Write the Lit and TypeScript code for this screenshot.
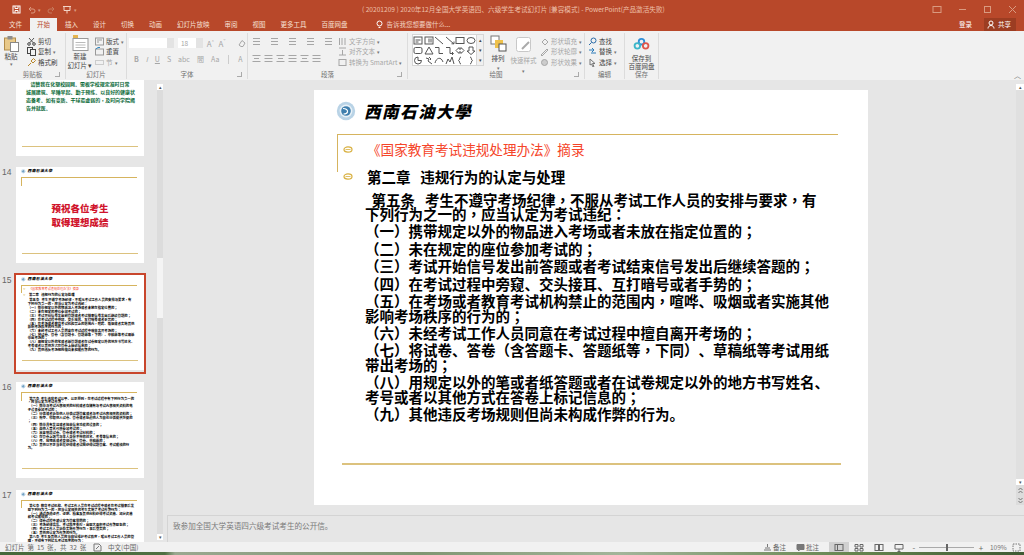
import { LitElement, html, css, svg } from "lit";
import { customElement, property } from "lit/decorators.js";

const ic = (body: unknown, w = 9, h = 9) =>
  html`<svg class="ic" width=${w} height=${h} viewBox="0 0 ${w} ${h}" fill="none" stroke="currentColor" stroke-width="1">${body}</svg>`;

// centres the full width punctuation in its cell, the slide font does that
const punct = (text: string) =>
  text.split(/([（）；：，])/).map((part) =>
    /^[（）；：，]$/.test(part) ? html`<span class="pc">${part}</span>` : part
  );

const BODY_15 = [
  "  第五条\u00a0\u00a0\u00a0考生不遵守考场纪律，不服从考试工作人员的安排与要求，有\n下列行为之一的，应当认定为考试违纪：",
  "（一）携带规定以外的物品进入考场或者未放在指定位置的；",
  "（二）未在规定的座位参加考试的；",
  "（三）考试开始信号发出前答题或者考试结束信号发出后继续答题的；",
  "（四）在考试过程中旁窥、交头接耳、互打暗号或者手势的；",
  "（五）在考场或者教育考试机构禁止的范围内，喧哗、吸烟或者实施其他\n影响考场秩序的行为的；",
  "（六）未经考试工作人员同意在考试过程中擅自离开考场的；",
  "（七）将试卷、答卷（含答题卡、答题纸等，下同）、草稿纸等考试用纸\n带出考场的；",
  "（八）用规定以外的笔或者纸答题或者在试卷规定以外的地方书写姓名、\n考号或者以其他方式在答卷上标记信息的；",
  "（九）其他违反考场规则但尚未构成作弊的行为。",
];

const BODY_16 = [
  "  第六条  考生违背考试公平、公正原则，在考试过程中有下列行为之一的，应当认定为考试作弊：",
  "  （一）携带与考试内容相关的材料或者存储有与考试内容相关资料的电子设备参加考试的；",
  "  （二）抄袭或者协助他人抄袭试题答案或者与考试内容相关的资料的；",
  "  （三）抢夺、窃取他人试卷、答卷或者胁迫他人为自己抄袭提供方便的；",
  "  （四）携带具有发送或者接收信息功能的设备的；",
  "  （五）由他人冒名代替参加考试的；",
  "  （六）故意销毁试卷、答卷或者考试材料的；",
  "  （七）在答卷上填写与本人身份不符的姓名、考号等信息的；",
  "  （八）传、接物品或者交换试卷、答卷、草稿纸的；",
  "  （九）其他以不正当手段获得或者试图获得试题答案、考试成绩的行为。",
];

const BODY_17 = [
  "  第七条  教育考试机构、考试工作人员在考试过程中或者在考试结束后发现下列行为之一的，应当认定相关的考生实施了考试作弊行为：",
  "  （一）通过伪造证件、证明、档案及其他材料获得考试资格、加分资格和考试成绩的；",
  "  （二）评卷过程中被认定为答案雷同的；",
  "  （三）考场纪律混乱、考试秩序失控，出现大面积考试作弊现象的；",
  "  （四）考试工作人员协助实施作弊行为，事后查实的；",
  "  （五）其他应认定为作弊的行为。",
  "",
  "  第八条  考生及其他人员应当自觉维护考试秩序，服从考试工作人员的管理，不得有下列扰乱考试秩序的行为：",
];

const BODY_13 =
  "    请赞我在化塑校园网。需板学校规定准时日常\n城展建筑、早睡早起、勤于预练。以良好的健康状\n态备考。如有变质、干球霉虚弱的，及时向学院揭\n告并就医。";

@customElement("slide-page")
class SlidePage extends LitElement {
  @property() kind = "15";

  bullet() {
    return html`<svg class="bullet" width="10" height="7" viewBox="0 0 10 7" fill="none" stroke="#d8b040" stroke-width="1.2">
      <ellipse cx="5" cy="3.5" rx="4" ry="2.6"></ellipse>
      <path d="M2.5 3.5h5" stroke-width=".8"></path>
    </svg>`;
  }

  header() {
    return html`<div class="brand">
      <svg width="20" height="20" viewBox="0 0 20 20">
        <circle cx="10" cy="10" r="9.2" fill="#b9d3e6"></circle>
        <circle cx="10" cy="10" r="6.4" fill="#e8f1f7"></circle>
        <circle cx="10" cy="10" r="4.8" fill="#3f7fae"></circle>
        <path d="M7 7.5c3 0 5 1.5 4.5 3.5S8.5 13 7.5 13" fill="none" stroke="#fff" stroke-width="1.2"></path>
      </svg>
      <span class="brand-name">西南石油大學</span>
    </div>`;
  }

  paragraphs(list: string[]) {
    return list.map((p) => html`<p>${punct(p)}</p>`);
  }

  render() {
    if (this.kind === "13") {
      return html`<div class="page">
        <div class="green">${punct(BODY_13)}</div>
        <div class="foot"></div>
      </div>`;
    }
    if (this.kind === "14") {
      return html`<div class="page">
        ${this.header()}
        <div class="frame"></div>
        <div class="greet">预祝各位考生<br />取得理想成绩</div>
        <div class="foot"></div>
      </div>`;
    }
    if (this.kind === "15") {
      return html`<div class="page">
        ${this.header()}
        <div class="frame">
          <div class="title">${this.bullet()}<span>《国家教育考试违规处理办法》摘录</span></div>
          <div class="chapter">${this.bullet()}<span>第二章&nbsp;&nbsp;&nbsp;违规行为的认定与处理</span></div>
        </div>
        <div class="body">${this.paragraphs(BODY_15)}</div>
        <div class="foot"></div>
      </div>`;
    }
    return html`<div class="page">
      ${this.header()}
      <div class="frame"></div>
      <div class="body wrap">${this.paragraphs(this.kind === "16" ? BODY_16 : BODY_17)}</div>
      <div class="foot"></div>
    </div>`;
  }

  static styles = css`
    :host {
      display: block;
      width: 554px;
      height: 415px;
      font-family: "Noto Sans CJK SC", "Liberation Sans", sans-serif;
    }
    .page {
      position: relative;
      width: 554px;
      height: 415px;
      background: #fff;
      overflow: hidden;
      color: #000;
    }
    .brand {
      display: flex;
      align-items: center;
      gap: 8px;
      height: 44px;
      padding: 0 0 3px 22px;
      box-sizing: border-box;
    }
    .brand-name {
      font-size: 16.5px;
      font-weight: 900;
      font-style: italic;
      letter-spacing: 1.5px;
      line-height: 20px;
    }
    .frame {
      height: 38px;
      margin-left: 23px;
      margin-right: 30px;
      border-top: 1.5px solid #d6b45e;
      border-left: 1.5px solid #d6b45e;
      box-sizing: border-box;
    }
    .title {
      display: flex;
      align-items: center;
      gap: 14px;
      height: 28px;
      padding-left: 5px;
      font-size: 13.6px;
      color: #f5452a;
    }
    .chapter {
      display: flex;
      align-items: center;
      gap: 14px;
      height: 26px;
      padding-left: 5px;
      font-size: 14.5px;
      font-weight: 700;
    }
    .bullet {
      flex: none;
    }
    .body {
      position: absolute;
      top: 102.5px;
      left: 51px;
      width: 490px;
      font-size: 14.5px;
      font-weight: 700;
      line-height: 14.6px;
    }
    .body p {
      margin: 0 0 2.8px;
      white-space: pre;
    }
    .body.wrap {
      top: 64px;
      width: 462px;
    }
    .body.wrap p {
      white-space: pre-wrap;
    }
    .pc {
      display: inline-block;
      width: 1em;
      text-align: center;
      font-family: "Noto Sans CJK TC", sans-serif;
    }
    .foot {
      position: absolute;
      left: 28px;
      right: 27px;
      bottom: 40px;
      border-top: 2px solid #dcc27e;
    }
    .greet {
      position: absolute;
      left: 0;
      right: 0;
      top: 150px;
      text-align: center;
      font-size: 41px;
      line-height: 60px;
      font-weight: 900;
      color: #d0142c;
    }
    .green {
      padding: 86px 0 0 43px;
      font-size: 21.5px;
      line-height: 35px;
      font-weight: 700;
      color: #0b6a38;
      white-space: pre;
    }
  `;
}

const shapes = [
  svg`<rect x="1" y="1" width="8" height="7"/><path d="M2.5 4h5M2.5 6h3"/>`,
  svg`<rect x="1" y="1" width="8" height="7"/><path d="M5 2.5v4M7 2.5v4"/>`,
  svg`<path d="M1 1l8 7"/>`,
  svg`<path d="M1 1l8 7M6.5 7.8h2.5V5.5"/>`,
  svg`<rect x="1" y="1.5" width="8" height="6"/>`,
  svg`<ellipse cx="5" cy="4.5" rx="4" ry="3"/>`,
  svg`<rect x="1" y="1.5" width="8" height="6" rx="1.5"/>`,
  svg`<path d="M5 1l4 7H1z"/>`,
  svg`<path d="M1 1.5h4v6h4"/>`,
  svg`<path d="M1 1.5h4v6h3M7 6l1.5 1.5L7 9"/>`,
  svg`<path d="M1 4.5l3-3V3h2V1.5l3 3-3 3V6H4v1.5z"/>`,
  svg`<path d="M3 1h4v4h2L5 8.5 1 5h2z"/>`,
  svg`<path d="M5 1a3.5 3.5 0 1 0 3.5 3.5H5z"/>`,
  svg`<path d="M2 2l3 1-1 2 4 3M5 1l2 2-1 1"/>`,
  svg`<path d="M1 7c1-5 6-7 8-1"/>`,
  svg`<path d="M1 8l2-5 2 3 2-5 2 7"/>`,
  svg`<path d="M6 1c-2 0-1 3.5-2.5 3.5C5 4.5 4 8 6 8"/>`,
  svg`<path d="M4 1c2 0 1 3.5 2.5 3.5C5 4.5 6 8 4 8"/>`,
];

@customElement("app-root")
class AppRoot extends LitElement {
  thumb(n: string) {
    return html`<div class="thumb-row ${n === "15" ? "current" : ""}">
      <span class="num">${n}</span>
      <div class="thumb"><slide-page kind=${n}></slide-page></div>
    </div>`;
  }

  ribbon() {
    return html`<div class="ribbon">
      <div class="group g-clip">
        <div class="tools">
          <div class="big paste">
            ${ic(svg`<rect x="1.5" y="3" width="11" height="12" fill="#e8c98a" stroke="#b28c4a"/><rect x="4.5" y="1" width="5" height="3.5" fill="#8d8d8d" stroke="none"/><rect x="7.5" y="7.5" width="8" height="9" fill="#fff" stroke="#888"/>`, 17, 17)}
            <span class="lbl">粘贴</span><span class="caret">▾</span>
          </div>
          <div class="col">
            <div class="item">${ic(svg`<circle cx="2" cy="7" r="1.3"/><circle cx="7" cy="7" r="1.3"/><path d="M2.5 6L7 1M6.5 6L2 1" stroke="#555"/>`)}<span>剪切</span></div>
            <div class="item">${ic(svg`<rect x=".5" y=".5" width="5" height="6"/><rect x="3.5" y="2.5" width="5" height="6" fill="#f1f1f1"/>`)}<span>复制</span><span class="caret">▾</span></div>
            <div class="item">${ic(svg`<path d="M1 8l3-3M4 3l2 2 2.5-2.5-2-2z" stroke="#b8862b"/>`)}<span>格式刷</span></div>
          </div>
        </div>
        <div class="cap">剪贴板<i class="launch"></i></div>
      </div>

      <div class="group g-slide">
        <div class="tools">
          <div class="big new">
            ${ic(svg`<rect x="1" y="3.5" width="15" height="12" fill="#fff" stroke="#999"/><path d="M3.5 7.5h10M3.5 10h10M3.5 12.5h10" stroke="#bbb"/><rect x="1" y="0" width="5" height="3" fill="#e5b44f" stroke="none"/>`, 17, 16)}
            <span class="lbl">新建</span><span class="lbl">幻灯片 ▾</span>
          </div>
          <div class="col">
            <div class="item">${ic(svg`<rect x=".5" y="1" width="8" height="7" stroke="#999"/><path d="M2 3h5M2 5h2" stroke="#999"/>`)}<span>版式</span><span class="caret">▾</span></div>
            <div class="item">${ic(svg`<rect x=".5" y="2" width="8" height="6" stroke="#999"/><path d="M1 2l2-1.5h2" stroke="#2e86c1"/>`)}<span>重置</span></div>
            <div class="item off">${ic(svg`<rect x=".5" y="2.5" width="8" height="4" stroke-dasharray="1 1"/>`)}<span>节</span><span class="caret">▾</span></div>
          </div>
        </div>
        <div class="cap">幻灯片</div>
      </div>

      <div class="group g-font">
        <div class="tools stack">
          <div class="row r-font">
            <div class="combo c-name"><i></i></div>
            <div class="combo c-size"><span>18</span><i></i></div>
            <span class="fa off">A<sup>^</sup></span><span class="fa off">A<sup>ˇ</sup></span>
            <span class="fa-clear off">${ic(svg`<path d="M1 6l3-4.5 3 2.5-2 3.5H3z"/>`)}</span>
          </div>
          <div class="row r-style off">
            <b>B</b><em>I</em><u>U</u><span>S</span><span>abc</span><span>間</span><span>Aa</span><span class="sep"></span><span>A</span>
          </div>
        </div>
        <div class="cap">字体<i class="launch"></i></div>
      </div>

      <div class="group g-para">
        <div class="tools">
          <div class="para">
            <div class="row off r-top">
              ${[0, 1, 2, 3, 4].map(() => ic(svg`<path d="M1 1.5h7M1 4.5h7M1 7.5h7"/>`))}
            </div>
            <div class="row off r-bottom">
              ${[0, 1, 2, 3, 4, 5].map((i) => ic(svg`<path d="M.5 1.5h8M${i % 2 ? 0.5 : 2} 4.5h${i % 2 ? 8 : 5}M.5 7.5h8"/>`))}
            </div>
          </div>
          <div class="col off">
            <div class="item">${ic(svg`<path d="M1.5 1v7M4 1v7M7 1v7"/>`)}<span>文字方向</span><span class="caret">▾</span></div>
            <div class="item">${ic(svg`<path d="M1 1h7M4.5 3v5M1 8h7"/>`)}<span>对齐文本</span><span class="caret">▾</span></div>
            <div class="item">${ic(svg`<rect x="1" y="1.5" width="7" height="6"/>`)}<span>转换为 SmartArt</span><span class="caret">▾</span></div>
          </div>
        </div>
        <div class="cap">段落<i class="launch"></i></div>
      </div>

      <div class="group g-draw">
        <div class="tools">
          <div class="gallery">
            <div class="shapes">${shapes.map((s) => ic(s, 10, 9))}</div>
            <div class="scroll"><span>▴</span><span>▾</span><span>▾</span></div>
          </div>
          <div class="big arrange">
            ${ic(svg`<rect x="1" y="1" width="8" height="8" fill="#fff" stroke="#777"/><rect x="5" y="5" width="8" height="8" fill="#efc14a" stroke="none"/><rect x="9" y="9" width="7" height="7" fill="#fff" stroke="#555"/>`, 17, 17)}
            <span class="lbl">排列</span><span class="caret">▾</span>
          </div>
          <div class="big quick off">
            ${ic(svg`<rect x="1.5" y="1.5" width="14" height="14" rx="2" fill="#fff" stroke="#c8c8c8"/><path d="M7 13l7-7" stroke="#aaa" stroke-width="2"/>`, 17, 17)}
            <span class="lbl">快速样式</span><span class="caret">▾</span>
          </div>
          <div class="col off">
            <div class="item">${ic(svg`<path d="M2 5l3-3 3 3-3 3z"/>`)}<span>形状填充</span><span class="caret">▾</span></div>
            <div class="item">${ic(svg`<path d="M1 8l6-6 1 1-6 6z"/>`)}<span>形状轮廓</span><span class="caret">▾</span></div>
            <div class="item">${ic(svg`<circle cx="4.5" cy="4.5" r="3" fill="#ccc"/>`)}<span>形状效果</span><span class="caret">▾</span></div>
          </div>
        </div>
        <div class="cap">绘图<i class="launch"></i></div>
      </div>

      <div class="group g-edit">
        <div class="tools">
          <div class="col">
            <div class="item">${ic(svg`<circle cx="5.5" cy="3.5" r="2.5" stroke="#2b6ca8"/><path d="M3.5 5.5L1 8" stroke="#2b6ca8"/>`)}<span>查找</span></div>
            <div class="item">${ic(svg`<path d="M1 3h5M4 1l2 2-2 2M8 6H3" stroke="#2b7bb9"/>`)}<span>替换</span><span class="caret">▾</span></div>
            <div class="item">${ic(svg`<path d="M2 1l5 4.5H4.5L6 8.5 5 9 3.5 6 2 7z" stroke="#777"/>`)}<span>选择</span><span class="caret">▾</span></div>
          </div>
        </div>
        <div class="cap">编辑</div>
      </div>

      <div class="group g-save">
        <div class="tools">
          <div class="big cloud">
            <svg width="17" height="13" viewBox="0 0 17 13" fill="none" stroke-width="2">
              <circle cx="8.5" cy="4" r="3" stroke="#2f8fd8"></circle>
              <circle cx="4" cy="8.5" r="3" stroke="#3bb6c9"></circle>
              <circle cx="13" cy="8.5" r="3" stroke="#e0564a"></circle>
            </svg>
            <span class="lbl lbl-top">保存到</span><span class="lbl">百度网盘</span>
          </div>
        </div>
        <div class="cap">保存</div>
      </div>

      <span class="collapse">︿</span>
    </div>`;
  }

  render() {
    return html`
      <div class="app">
        <div class="titlebar">
          <div class="qat">
            ${ic(svg`<rect x="1" y="1" width="7" height="7" stroke="#fff"/><path d="M3 1v2.5h3V1M3 8V5.5h3V8" stroke="#fff"/>`)}
            ${ic(svg`<path d="M2 4h4a2 2 0 0 1 0 4H4M2 4l2-2M2 4l2 2" stroke="#dc9a80"/>`)}
            <span class="dim">▾</span>
            ${ic(svg`<path d="M7 4H3a2 2 0 0 0 0 4h2M7 4L5 2M7 4L5 6" stroke="#c67a5e"/>`)}
            ${ic(svg`<path d="M1 1.5h8M2 1.5v4h6v-4M5 5.5v3" stroke="#f3d4c6"/>`, 10, 9)}
            <span class="dim">▾</span>
          </div>
          <div class="doc">( 20201209 ) 2020年12月全国大学英语四、六级学生考试幻灯片 [兼容模式] - PowerPoint(产品激活失败)</div>
          <div class="winbtns">
            ${ic(svg`<rect x="1" y="1.5" width="8" height="6" stroke="#d99a80"/>`, 10, 9)}
            ${ic(svg`<path d="M1 4.5h7" stroke="#d99a80"/>`)}
            ${ic(svg`<rect x="1.5" y="1.5" width="6" height="6" stroke="#d99a80"/>`)}
            ${ic(svg`<path d="M1 1l7 7M8 1l-7 7" stroke="#d99a80"/>`)}
          </div>
        </div>

        <div class="tabs">
          <span class="tab">文件</span>
          <span class="tab active">开始</span>
          ${["插入", "设计", "切换", "动画", "幻灯片放映", "审阅", "视图", "更多工具", "百度网盘"].map(
            (t) => html`<span class="tab">${t}</span>`
          )}
          <span class="tell">
            ${ic(svg`<circle cx="4.5" cy="3.5" r="2.5" stroke="#fff"/><path d="M3.5 7.5h2" stroke="#fff"/>`)}
            告诉我您想要做什么...
          </span>
          <span class="login">登录</span>
          <span class="share">
            ${ic(svg`<circle cx="4" cy="3" r="2" stroke="#fff"/><path d="M1 8.5c0-4 6-4 6 0" stroke="#fff"/>`)}共享
          </span>
        </div>

        ${this.ribbon()}

        <div class="main">
          <aside class="panel">
            <div class="thumbs">
              <div class="thumb-row first"><span class="num"></span><div class="thumb"><slide-page kind="13"></slide-page></div></div>
              ${this.thumb("14")}
              ${this.thumb("15")}
              ${this.thumb("16")}
              ${this.thumb("17")}
            </div>
            <div class="vbar small">
              <span class="arrow">▴</span>
              <span class="bar-thumb"></span>
              <span class="arrow end">▾</span>
            </div>
          </aside>

          <div class="work">
            <div class="canvas-row">
              <div class="canvas"><slide-page kind="15"></slide-page></div>
              <div class="vbar">
                <span class="arrow">▴</span>
                <span class="grow"></span>
                <span class="arrow">▾</span>
                <span class="jump">${ic(svg`<path d="M1.5 4L3.5 2l2 2M1.5 7l2-2 2 2" stroke="#777"/>`, 7, 9)}</span>
                <span class="jump">${ic(svg`<path d="M1.5 2l2 2 2-2M1.5 5l2 2 2-2" stroke="#777"/>`, 7, 9)}</span>
              </div>
            </div>
            <div class="notes">致参加全国大学英语四六级考试考生的公开信。</div>
          </div>
        </div>

        <div class="status">
          <span class="st-count">幻灯片 第 15 张，共 32 张</span>
          <span class="st-ic">${ic(svg`<path d="M1 1h5l2 2v5H1zM3 6l3-3" stroke="#777"/>`)}</span>
          <span>中文(中国)</span>
          <div class="st-right">
            <span class="st-btn">${ic(svg`<path d="M1 7h7M2 5h5M4.5 1v3" stroke="#777"/>`)}备注</span>
            <span class="st-btn">${ic(svg`<path d="M1 1.5h7v5H4L2.5 8V6.5H1z" fill="#777" stroke="#777"/>`)}批注</span>
            <span class="view on">${ic(svg`<rect x="1" y="1.5" width="8" height="6" stroke="#666"/><path d="M3.5 1.5v6" stroke="#666"/>`, 10, 9)}</span>
            <span class="view">${ic(svg`<path d="M1 1.5h3V4H1zM6 1.5h3V4H6zM1 5.5h3V8H1zM6 5.5h3V8H6z" stroke="#666"/>`, 10, 9)}</span>
            <span class="view">${ic(svg`<rect x="1" y="1.5" width="8" height="6" stroke="#666"/><path d="M5 1.5v6" stroke="#666" stroke-width="2"/>`, 10, 9)}</span>
            <span class="view">${ic(svg`<path d="M1 1.5h8V6H1zM5 6v2M3.5 8.5h3" stroke="#666"/>`, 10, 9)}</span>
            <span class="zoom-btn">-</span>
            <span class="slider"><i></i></span>
            <span class="zoom-btn">+</span>
            <span class="pct">109%</span>
            <span class="fit">${ic(svg`<rect x="1" y="1" width="7" height="7" stroke-dasharray="1.5 1" stroke="#777"/>`)}</span>
          </div>
        </div>
        <div class="desk"></div>
      </div>
    `;
  }

  static styles = css`
    :host {
      display: block;
      width: 1024px;
      height: 555px;
      overflow: hidden;
      font-family: "Noto Sans CJK SC", "Liberation Sans", sans-serif;
    }
    .app {
      display: flex;
      flex-direction: column;
      height: 555px;
      background: #e6e6e6;
      color: #444;
      font-size: 6.5px;
      line-height: 9px;
    }
    .ic {
      flex: none;
      display: block;
    }

    .titlebar {
      display: flex;
      align-items: center;
      height: 18px;
      background: #b8482a;
      flex: none;
    }
    .qat {
      display: flex;
      align-items: center;
      gap: 6px;
      width: 362px;
      padding-left: 12px;
      box-sizing: border-box;
      color: #fff;
    }
    .dim {
      color: #dc9a80;
      font-size: 5px;
      margin-left: -4px;
    }
    .doc {
      color: #eec0aa;
      font-size: 6.6px;
      white-space: nowrap;
    }
    .winbtns {
      display: flex;
      align-items: center;
      gap: 16px;
      margin-left: auto;
      padding-right: 7px;
    }

    .tabs {
      display: flex;
      align-items: stretch;
      height: 13px;
      flex: none;
      background: #b8482a;
      color: #f7e0d4;
      padding-left: 9px;
      gap: 15px;
      line-height: 13px;
      white-space: nowrap;
    }
    .tab.active {
      background: #f1f1f1;
      color: #b8482a;
      padding: 0 7px;
      margin: 0 -7px;
    }
    .tell {
      display: flex;
      align-items: center;
      gap: 3px;
      margin-left: 12px;
      color: #f2d2c2;
    }
    .login {
      margin-left: auto;
      color: #fff;
      margin-right: -3px;
    }
    .share {
      display: flex;
      align-items: center;
      gap: 2px;
      padding: 0 3px;
      margin: 0 8px 0 0;
      height: 13px;
      width: 26px;
      background: #9c3d22;
      color: #fff;
    }

    .ribbon {
      position: relative;
      display: flex;
      height: 49px;
      flex: none;
      background: #f1f1f1;
      white-space: nowrap;
    }
    .group {
      display: flex;
      flex-direction: column;
      box-sizing: border-box;
      margin: 2px 0 1px;
      border-right: 1px solid #dcdcdc;
    }
    .g-clip { width: 66px; }
    .g-slide { width: 61px; }
    .g-font { width: 121px; }
    .g-para { width: 160px; }
    .g-draw { width: 177px; }
    .g-edit { width: 40px; }
    .g-save { width: 34px; }
    .tools {
      flex: 1;
      display: flex;
      min-height: 0;
    }
    .tools.stack {
      flex-direction: column;
    }
    .cap {
      position: relative;
      height: 9px;
      flex: none;
      text-align: center;
      color: #707070;
    }
    .launch {
      position: absolute;
      right: 5px;
      top: 2px;
      width: 4px;
      height: 4px;
      border-right: 1px solid #aaa;
      border-bottom: 1px solid #aaa;
    }
    .big {
      display: flex;
      flex-direction: column;
      align-items: center;
      flex: none;
    }
    .lbl {
      display: block;
      line-height: 8px;
    }
    .caret {
      color: #777;
      font-size: 5px;
      line-height: 7px;
    }
    .col {
      display: flex;
      flex-direction: column;
      justify-content: space-between;
      padding: 3px 0;
    }
    .item {
      display: flex;
      align-items: center;
      gap: 2px;
      height: 10px;
    }
    .off {
      color: #a6a6a6;
    }

    .paste {
      width: 20px;
      margin: 2px 5px 0 1px;
    }
    .g-clip .col {
      padding-left: 1px;
    }
    .new {
      width: 24px;
      margin: 2px 3px 0 2px;
      gap: 1px;
    }

    .row {
      display: flex;
      align-items: center;
    }
    .r-font {
      height: 12px;
      margin: 4px 0 0 2px;
      gap: 4px;
    }
    .combo {
      position: relative;
      height: 10px;
      background: #fff;
      line-height: 10px;
      color: #a6a6a6;
      box-sizing: border-box;
      padding-left: 3px;
    }
    .combo i {
      position: absolute;
      right: 0;
      top: 0;
      bottom: 0;
      width: 7px;
      background: #e3e3e3;
    }
    .c-name { width: 47px; }
    .c-size { width: 26px; }
    .fa {
      font-size: 8px;
      width: 8px;
    }
    .fa sup {
      font-size: 4px;
      line-height: 0;
    }
    .fa-clear {
      margin-left: 8px;
    }
    .r-style {
      margin: 6px 0 0 7px;
      gap: 7px;
      font-size: 7px;
    }
    .r-style .sep {
      width: 1px;
      height: 9px;
      background: #ccc;
      margin: 0 2px;
    }

    .para {
      display: flex;
      flex-direction: column;
      width: 90px;
      padding: 3.5px 0 0 4px;
      box-sizing: border-box;
      gap: 8px;
    }
    .r-top {
      gap: 9px;
    }
    .r-bottom {
      gap: 3px;
    }

    .gallery {
      display: flex;
      width: 72px;
      height: 32px;
      margin: 1px 6px 0 4px;
      background: #fff;
      border: 1px solid #d6d6d6;
      box-sizing: border-box;
      flex: none;
    }
    .shapes {
      display: grid;
      grid-template-columns: repeat(6, 10.5px);
      grid-auto-rows: 10px;
      flex: 1;
      color: #555;
      align-items: center;
      justify-items: center;
    }
    .scroll {
      display: flex;
      flex-direction: column;
      width: 7px;
      margin-left: auto;
      font-size: 5px;
      line-height: 10px;
      text-align: center;
      background: #f0f0f0;
      border-left: 1px solid #d6d6d6;
    }
    .arrange {
      width: 16px;
      margin: 2px 4px 0 0;
      gap: 2px;
    }
    .quick {
      width: 27px;
      margin: 3px 3px 0 0;
      gap: 3px;
    }
    .g-edit .col {
      padding-left: 3px;
    }
    .cloud {
      width: 33px;
      margin-top: 5px;
    }
    .lbl-top {
      margin-top: 4px;
    }
    .collapse {
      position: absolute;
      right: 3px;
      bottom: 0;
      color: #777;
      font-size: 7px;
    }

    .main {
      flex: 1;
      display: flex;
      min-height: 0;
    }
    .panel {
      display: flex;
      width: 163px;
      flex: none;
      overflow: hidden;
    }
    .thumbs {
      flex: 1;
      min-width: 0;
      margin-top: -20px;
    }
    .thumb-row {
      display: flex;
      height: 107.5px;
      box-sizing: border-box;
      padding-top: 4px;
    }
    .first {
      height: 103px;
      padding-top: 0;
    }
    .num {
      width: 16px;
      padding-left: 2px;
      box-sizing: border-box;
      color: #666;
      font-size: 8.5px;
      line-height: 10px;
      font-family: "Liberation Sans", sans-serif;
    }
    .thumb {
      width: 128px;
      height: 96px;
      overflow: hidden;
      flex: none;
    }
    .thumb slide-page {
      zoom: 0.231;
    }
    .current .thumb {
      outline: 2px solid #c8462c;
      height: 97px;
    }

    .vbar {
      display: flex;
      flex-direction: column;
      align-items: center;
      width: 8px;
      flex: none;
      background: #dcdcdc;
      color: #555;
      font-size: 5px;
      line-height: 6px;
      margin: 4px 0 10px;
    }
    .vbar.small {
      width: 6px;
      margin: 4px 0 2px;
    }
    .arrow {
      display: block;
      width: 100%;
      height: 6px;
      background: #fff;
      text-align: center;
      flex: none;
    }
    .arrow.end {
      margin-top: auto;
    }
    .bar-thumb {
      display: block;
      width: 100%;
      height: 60px;
      margin-top: 168px;
      background: #f4f4f4;
    }
    .grow {
      flex: 1;
      width: 100%;
      background: #e0e0e0;
    }
    .jump {
      display: block;
      height: 10px;
      padding-top: 1px;
      box-sizing: border-box;
    }

    .work {
      flex: 1;
      min-width: 0;
      display: flex;
      flex-direction: column;
    }
    .canvas-row {
      flex: 1;
      display: flex;
      min-height: 0;
    }
    .canvas {
      flex: 1;
      padding: 10px 0 0 151px;
      min-width: 0;
    }
    .notes {
      height: 27px;
      flex: none;
      box-sizing: border-box;
      margin-left: 4px;
      border-top: 1px solid #d4d4d4;
      border-left: 1px solid #d4d4d4;
      padding: 4px 0 0 5px;
      color: #7a7a7a;
      font-size: 7.6px;
      line-height: 12px;
    }

    .status {
      display: flex;
      align-items: center;
      height: 10px;
      flex: none;
      background: #f1f1f1;
      color: #666;
      padding-left: 5px;
      white-space: nowrap;
      font-size: 6.5px;
    }
    .st-count {
      word-spacing: 1.5px;
      width: 77px;
    }
    .st-ic {
      margin: 0 6px 0 11px;
    }
    .st-right {
      display: flex;
      align-items: center;
      margin-left: auto;
      height: 100%;
    }
    .st-btn {
      display: flex;
      align-items: center;
      gap: 1px;
      margin-right: 10px;
    }
    .view {
      display: flex;
      justify-content: center;
      align-items: center;
      width: 20px;
      height: 100%;
    }
    .view.on {
      background: #d0d0d0;
    }
    .zoom-btn {
      width: 6px;
      text-align: center;
      font-size: 8px;
      margin-left: 2px;
    }
    .slider {
      position: relative;
      display: block;
      width: 55px;
      height: 1px;
      margin: 0 2px;
      background: #aaa;
    }
    .slider i {
      position: absolute;
      left: 27px;
      top: -3px;
      width: 2px;
      height: 7px;
      background: #666;
    }
    .pct {
      margin-left: 6px;
      width: 22px;
      color: #777;
    }
    .fit {
      width: 12px;
    }

    .desk {
      height: 3px;
      flex: none;
      background: linear-gradient(90deg, #46683a 0, #4f7042 165px, #9aa890 175px, #7f9672 420px, #a3b59a 620px, #65854f 850px, #3f5a34 1024px);
    }
  `;
}

export { SlidePage, AppRoot };
